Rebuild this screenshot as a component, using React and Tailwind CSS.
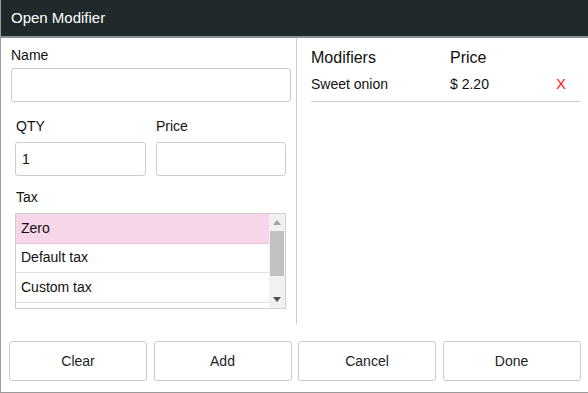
import React from 'react';

const font = { fontFamily: '"Liberation Sans", Arial, sans-serif' };

const TaxList = () => {
  const taxes = ['Zero', 'Default tax', 'Custom tax', ''];
  return (
    <div className="mt-[8px] ml-[4px] w-[271px] h-[96px] border border-[#cfcfcf] flex overflow-hidden">
      <div className="flex-1 flex flex-col">
        {taxes.map((t, i) => (
          <div
            key={i}
            className={`h-[29.5px] shrink-0 flex items-center px-[5px] text-[14px] text-[#111] border-b border-[#e2e2e2] ${i === 0 ? 'bg-[#f7d6ea] border-[#e8c3d6]' : 'bg-white'}`}
          >
            {t}
          </div>
        ))}
      </div>
      <div className="w-[16px] bg-[#f1f1f1] flex flex-col items-center">
        <div className="h-[17px] flex items-center justify-center">
          <svg width="8" height="5" viewBox="0 0 8 5"><path d="M0 5 L4 0 L8 5 Z" fill="#a3a3a3" /></svg>
        </div>
        <div className="w-[14px] h-[45px] bg-[#c1c1c1]" />
        <div className="flex-1" />
        <div className="h-[17px] flex items-center justify-center">
          <svg width="8" height="5" viewBox="0 0 8 5"><path d="M0 0 L8 0 L4 5 Z" fill="#505050" /></svg>
        </div>
      </div>
    </div>
  );
};

const Btn = ({ children }) => (
  <button className="w-[138px] h-[40px] shrink-0 border border-[#cccccc] rounded-[3px] bg-white text-[14px] text-[#222]">
    {children}
  </button>
);

export default function App() {
  return (
    <div style={font} className="w-[588px] h-[393px] bg-white flex flex-col border-l border-b border-[#9a9a9a] overflow-hidden">
      <div className="h-[38px] shrink-0 bg-[#202a2b] border-b-2 border-[#8c9192] flex items-center pl-[10px] text-white text-[15px]">
        Open Modifier
      </div>
      <div className="flex h-[286px]">
        <div className="w-[296px] border-r border-[#cfcfcf] pl-[10px] pt-[9px]">
          <div className="text-[14px] text-[#111] leading-[16px]">Name</div>
          <div className="mt-[5px] w-[280px] h-[34px] border border-[#cccccc] rounded-[3px]" />
          <div className="flex gap-[10px] pl-[4px] mt-[16px]">
            <div className="flex flex-col">
              <div className="text-[14px] text-[#111] leading-[16px] pl-[1px]">QTY</div>
              <div className="mt-[8px] w-[131px] h-[34px] border border-[#cccccc] rounded-[3px] flex items-center px-[6px] text-[14px] text-[#111]">1</div>
            </div>
            <div className="flex flex-col">
              <div className="text-[14px] text-[#111] leading-[16px]">Price</div>
              <div className="mt-[8px] w-[130px] h-[34px] border border-[#cccccc] rounded-[3px]" />
            </div>
          </div>
          <div className="mt-[13px] pl-[5px] text-[14px] text-[#111] leading-[16px]">Tax</div>
          <TaxList />
        </div>
        <div className="flex-1 pl-[14px] pr-[8px] pt-[10px]">
          <div className="flex text-[16px] text-[#111] h-[20px] items-center">
            <div className="w-[139px]">Modifiers</div>
            <div>Price</div>
          </div>
          <div className="flex items-center text-[14px] text-[#111] h-[34px] border-b border-[#cfcfcf]">
            <div className="w-[139px]">Sweet onion</div>
            <div className="flex-1">$ 2.20</div>
            <div className="text-[#ff1a1a] text-[15px] pr-[14px]">X</div>
          </div>
        </div>
      </div>
      <div className="flex gap-[6.5px] pl-[8px] mt-[17px]">
        <Btn>Clear</Btn>
        <Btn>Add</Btn>
        <Btn>Cancel</Btn>
        <Btn>Done</Btn>
      </div>
    </div>
  );
}
